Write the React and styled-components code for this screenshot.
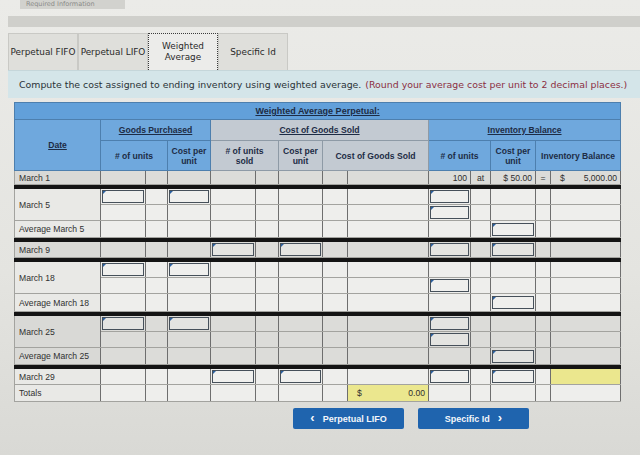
import React from 'react'
import styled, { createGlobalStyle } from 'styled-components'

const GlobalStyle = createGlobalStyle`
  html, body { margin: 0; padding: 0; }
  body {
    width: 640px;
    height: 455px;
    overflow: hidden;
    background: linear-gradient(180deg, #ebebe8 0%, #e4e4e0 60%, #d9d9d5 100%);
    font-family: "DejaVu Sans", Verdana, sans-serif;
  }
`

const cols = [86, 45, 22, 43, 45, 23, 44, 25, 81, 42, 20, 45, 15, 70]

const _ = ''
const I = 'in'

const rows = [
  { date: 'March 1', h: 14, shade: true, cells: [_, _, _, _, _, _, _, _, { t: '100', a: 'right' }, { t: 'at', a: 'center' }, { t: '$ 50.00', a: 'right' }, { t: '=', a: 'center' }, { money: '5,000.00' }] },
  { sep: true },
  { date: 'March 5', span: 2, h: 16, cells: [I, _, I, _, _, _, _, _, I, _, _, _, _] },
  { h: 16, cells: [_, _, _, _, _, _, _, _, I, _, _, _, _] },
  { date: 'Average March 5', h: 17, cells: [_, _, _, _, _, _, _, _, _, _, I, _, _] },
  { sep: true },
  { date: 'March 9', h: 16, shade: true, cells: [_, _, _, I, _, I, _, _, I, _, I, _, _] },
  { sep: true },
  { date: 'March 18', span: 2, h: 16, cells: [I, _, I, _, _, _, _, _, _, _, _, _, _] },
  { h: 15, cells: [_, _, _, _, _, _, _, _, I, _, _, _, _] },
  { date: 'Average March 18', h: 18, cells: [_, _, _, _, _, _, _, _, _, _, I, _, _] },
  { sep: true },
  { date: 'March 25', span: 2, h: 15, shade: true, cells: [I, _, I, _, _, _, _, _, I, _, _, _, _] },
  { h: 15, shade: true, cells: [_, _, _, _, _, _, _, _, I, _, _, _, _] },
  { date: 'Average March 25', h: 17, shade: true, cells: [_, _, _, _, _, _, _, _, _, _, I, _, _] },
  { sep: true },
  { date: 'March 29', h: 16, cells: [_, _, _, I, _, I, _, _, I, _, I, _, { yellow: true }] },
  { date: 'Totals', h: 17, cells: [_, _, _, _, _, _, _, { money: '0.00', yellow: true }, _, _, _, _, _] },
]

function Cell({ value, shade }) {
  if (value === I) {
    return (
      <Td $shade={shade} $input>
        <InputBox $shade={shade} />
      </Td>
    )
  }
  if (value && value.money !== undefined) {
    return (
      <Td $shade={shade} $yellow={value.yellow}>
        <Money><span>$</span><span>{value.money}</span></Money>
      </Td>
    )
  }
  if (value && value.yellow) return <Td $shade={shade} $yellow />
  if (value && value.t) return <Td $shade={shade} $align={value.a}>{value.t}</Td>
  return <Td $shade={shade} />
}

export default function App() {
  return (
    <>
      <GlobalStyle />
      <Page>
        <TopTab>Required Information</TopTab>
        <GreyBar />
        <Tabs>
          <Tab>Perpetual FIFO</Tab>
          <Tab>Perpetual LIFO</Tab>
          <Tab $active>Weighted<br />Average</Tab>
          <Tab>Specific Id</Tab>
        </Tabs>
        <Instruction>
          Compute the cost assigned to ending inventory using weighted average.{' '}
          <Note>(Round your average cost per unit to 2 decimal places.)</Note>
        </Instruction>

        <TableWrap>
          <Table>
            <colgroup>
              {cols.map((w, i) => <col key={i} style={{ width: w }} />)}
            </colgroup>
            <thead>
              <tr style={{ height: 17 }}>
                <Title colSpan={14}><u>Weighted Average Perpetual:</u></Title>
              </tr>
              <tr style={{ height: 21 }}>
                <Th rowSpan={2}><u>Date</u></Th>
                <Th colSpan={3}><u>Goods Purchased</u></Th>
                <Th colSpan={5} $grey><u>Cost of Goods Sold</u></Th>
                <Th colSpan={5}><u>Inventory Balance</u></Th>
              </tr>
              <tr style={{ height: 30 }}>
                <Th colSpan={2}># of units</Th>
                <Th>Cost per<br />unit</Th>
                <Th colSpan={2} $grey># of units<br />sold</Th>
                <Th $grey>Cost per<br />unit</Th>
                <Th colSpan={2} $grey>Cost of Goods Sold</Th>
                <Th colSpan={2}># of units</Th>
                <Th>Cost per<br />unit</Th>
                <Th colSpan={2}>Inventory Balance</Th>
              </tr>
            </thead>
            <tbody>
              {rows.map((r, i) =>
                r.sep ? (
                  <tr key={i}><Sep colSpan={14} /></tr>
                ) : (
                  <tr key={i} style={{ height: r.h }}>
                    {r.date && <DateCell rowSpan={r.span || 1} $shade={r.shade}>{r.date}</DateCell>}
                    {r.cells.map((c, j) => <Cell key={j} value={c} shade={r.shade} />)}
                  </tr>
                )
              )}
            </tbody>
          </Table>
        </TableWrap>

        <Buttons>
          <NavButton><Chev>‹</Chev>Perpetual LIFO</NavButton>
          <NavButton>Specific Id<Chev>›</Chev></NavButton>
        </Buttons>
      </Page>
    </>
  )
}

const Page = styled.div`
  width: 640px;
`
const TopTab = styled.div`
  margin-left: 20px;
  width: 105px;
  height: 9px;
  background: #d2d2ce;
  padding-left: 6px;
  box-sizing: border-box;
  font-size: 6.5px;
  line-height: 9px;
  color: #8a8a88;
  white-space: nowrap;
`
const GreyBar = styled.div`
  margin: 7px 0 0 8px;
  height: 11px;
  background: #cfcfcb;
`
const Tabs = styled.div`
  display: flex;
  margin: 6px 0 0 8px;
  height: 37px;
`
const Tab = styled.div`
  width: 70px;
  box-sizing: border-box;
  display: flex;
  align-items: center;
  justify-content: center;
  text-align: center;
  font-size: 8.9px;
  line-height: 11px;
  color: #2a2a2a;
  white-space: nowrap;
  background: ${p => (p.$active ? '#ececea' : '#dfdfdb')};
  border: ${p => (p.$active ? '1px dotted #3a3a3a' : '1px solid #c9c9c5')};
  border-bottom: none;
`
const Instruction = styled.div`
  margin-left: 8px;
  height: 28px;
  background: #d4e5e9;
  border-top: 1px solid #c5d6da;
  box-sizing: border-box;
  padding-left: 11px;
  display: flex;
  align-items: center;
  font-size: 9.4px;
  color: #2b3338;
  white-space: nowrap;
`
const Note = styled.span`
  color: #8c2f43;
  margin-left: 4px;
`
const TableWrap = styled.div`
  margin: 4px 0 0 14px;
`
const Table = styled.table`
  table-layout: fixed;
  border-collapse: collapse;
  width: 606px;
  font-family: "Liberation Sans", Arial, sans-serif;
  font-size: 8.6px;
  color: #2e2e2e;
`
const Title = styled.th`
  background: #62a0da;
  color: #1d2c45;
  font-weight: bold;
  font-size: 9px;
  padding: 0;
  border: 1px solid #4d7fae;
`
const Th = styled.th`
  background: ${p => (p.$grey ? '#c3cad2' : '#6fa8dd')};
  border: 1px solid ${p => (p.$grey ? '#8e9aa6' : '#4d7fae')};
  color: #1d2c45;
  font-weight: bold;
  font-size: 8.6px;
  line-height: 10px;
  padding: 0;
  white-space: nowrap;
`
const Td = styled.td`
  border: 1px solid #a3a39f;
  border-left-color: #6e6e6e;
  border-right-color: #6e6e6e;
  background: ${p => (p.$yellow ? '#ebe78e' : p.$shade ? '#dcdcd9' : '#eeeeec')};
  padding: ${p => (p.$input ? '1px' : '0 3px')};
  text-align: ${p => p.$align || 'left'};
  white-space: nowrap;
  overflow: hidden;
  vertical-align: middle;
`
const DateCell = styled.td`
  border: 1px solid #a3a39f;
  border-right-color: #6e6e6e;
  background: ${p => (p.$shade ? '#d9d9d6' : '#e9e9e6')};
  padding: 0 4px;
  white-space: nowrap;
  color: #303030;
`
const Sep = styled.td`
  height: 3px;
  padding: 0;
  background: #141414;
  border: 1px solid #141414;
`
const InputBox = styled.div`
  position: relative;
  height: 13px;
  box-sizing: border-box;
  border: 1px solid #46505a;
  background: ${p => (p.$shade ? '#e4e4e1' : '#efefed')};
  &::before {
    content: '';
    position: absolute;
    top: 0;
    left: 0;
    border-left: 3px solid #2b5f9e;
    border-bottom: 3px solid transparent;
  }
`
const Money = styled.div`
  display: flex;
  justify-content: space-between;
  padding-left: 6px;
`
const Buttons = styled.div`
  display: flex;
  gap: 14px;
  margin: 6px 0 0 293px;
`
const NavButton = styled.button`
  width: 111px;
  height: 21px;
  border: none;
  border-radius: 2px;
  background: #1f64ae;
  color: #f4f7fb;
  font-family: "Liberation Sans", Arial, sans-serif;
  font-weight: bold;
  font-size: 9px;
  display: flex;
  align-items: center;
  justify-content: center;
  gap: 8px;
  padding: 0;
`
const Chev = styled.span`
  font-size: 13px;
  line-height: 10px;
  margin-top: -2px;
`
